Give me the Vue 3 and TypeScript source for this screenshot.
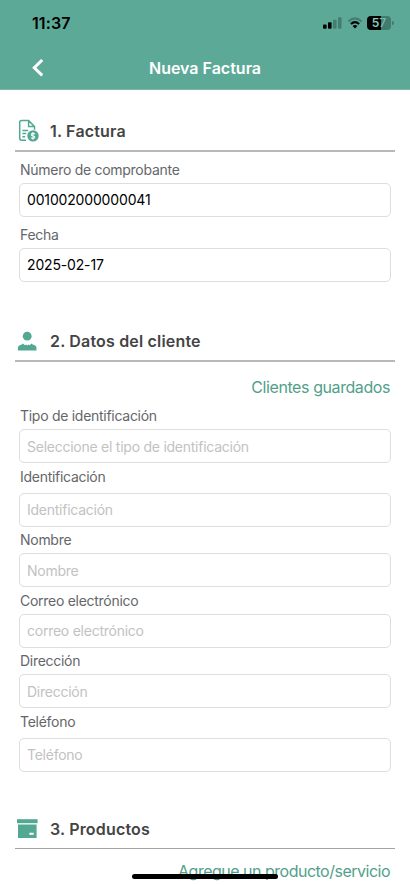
<script setup lang="ts">
import { ref } from 'vue'

interface Field {
  id: string
  label: string
  placeholder?: string
  value: string
  roomy?: boolean
}

const invoice = ref<Field[]>([
  { id: 'numero', label: 'Número de comprobante', value: '001002000000041' },
  { id: 'fecha', label: 'Fecha', value: '2025-02-17' },
])

const client = ref<Field[]>([
  { id: 'tipo', label: 'Tipo de identificación', placeholder: 'Seleccione el tipo de identificación', value: '' },
  { id: 'identificacion', label: 'Identificación', placeholder: 'Identificación', value: '', roomy: true },
  { id: 'nombre', label: 'Nombre', placeholder: 'Nombre', value: '' },
  { id: 'correo', label: 'Correo electrónico', placeholder: 'correo electrónico', value: '' },
  { id: 'direccion', label: 'Dirección', placeholder: 'Dirección', value: '' },
  { id: 'telefono', label: 'Teléfono', placeholder: 'Teléfono', value: '', roomy: true },
])
</script>

<template>
  <div class="screen">
    <header class="top">
      <div class="status">
        <span class="time">11:37</span>
        <div class="indicators">
          <svg class="signal" width="19" height="12" viewBox="0 0 19 12">
            <rect x="0" y="7.5" width="3.6" height="4.2" rx="1" />
            <rect x="5" y="5.3" width="3.6" height="6.4" rx="1" />
            <rect class="dim" x="10" y="2.8" width="3.6" height="8.9" rx="1" />
            <rect class="dim" x="15" y="0.3" width="3.6" height="11.4" rx="1" />
          </svg>
          <svg class="wifi" width="16" height="12" viewBox="0 0 16 12" fill="none">
            <path class="arc dim-stroke" d="M1.4 4.4Q8 -1.8 14.6 4.4" />
            <path class="arc" d="M3.9 7Q8 3.2 12.1 7" />
            <path fill="#000" d="M5.6 9Q8 7 10.4 9L8 11.4Z" />
          </svg>
          <div class="battery">
            <span class="level"><b>5</b><i>7</i></span>
            <span class="nub"></span>
          </div>
        </div>
      </div>
      <div class="nav">
        <button class="back" aria-label="Volver">
          <svg width="13" height="18" viewBox="0 0 13 18" fill="none">
            <path d="M10.2 1L2.3 8.7L10.2 16.4" stroke="#fff" stroke-width="3" />
          </svg>
        </button>
        <h1>Nueva Factura</h1>
      </div>
    </header>

    <main>
      <section class="invoice">
        <div class="heading">
          <svg class="icon" width="24" height="24" viewBox="0 0 24 24" fill="none">
            <path d="M9 21.2H4.6Q2.7 21.2 2.7 19.3V3.5Q2.7 1.6 4.6 1.6H11.6L17.5 7.5V10.8M11.6 1.6V7.5H17.5M5.4 11.4H11.2M5.4 14.6H9.2M5.4 17.8H8.2" stroke="#52a892" stroke-width="1.5" />
            <circle cx="16" cy="16.9" r="5.7" fill="#52a892" />
            <path d="M18 15.1Q16 13.7 14.5 14.9Q13.6 16.5 16 16.9Q18.5 17.4 17.5 18.9Q15.8 20.1 14 18.8M16 13V20.7" stroke="#fff" stroke-width="1.05" />
          </svg>
          <h2>1. Factura</h2>
        </div>
        <label v-for="f in invoice" :key="f.id" class="field">
          <span>{{ f.label }}</span>
          <input v-model="f.value" type="text" />
        </label>
      </section>

      <section class="client">
        <div class="heading">
          <svg class="icon" width="24" height="24" viewBox="0 0 24 24" fill="#52a892">
            <circle cx="10.2" cy="7.2" r="4.4" />
            <path d="M0.9 21.4V18.8Q1 16.5 3.3 15.9Q5 15.4 5.9 14.4L7.8 16.2L9 15.5L10.2 16.5L11.4 15.5L12.6 16.2L14.5 14.4Q15.4 15.4 17.1 15.9Q19.4 16.5 19.5 18.8V21.4Z" />
          </svg>
          <h2>2. Datos del cliente</h2>
        </div>
        <a class="link">Clientes guardados</a>
        <label v-for="f in client" :key="f.id" class="field" :class="{ roomy: f.roomy }">
          <span>{{ f.label }}</span>
          <input v-model="f.value" type="text" :placeholder="f.placeholder" />
        </label>
      </section>

      <section class="products">
        <div class="heading">
          <svg class="icon" width="24" height="24" viewBox="0 0 24 24">
            <path fill="#52a892" d="M0 2.2H20.6V6.2H0Z" />
            <path fill="#52a892" fill-rule="evenodd" d="M1 7.6H19.6V21H1ZM12.3 15.7V17.7H16.7V15.7Z" />
          </svg>
          <h2>3. Productos</h2>
        </div>
        <a class="link">Agregue un producto/servicio</a>
      </section>
    </main>
    <div class="home-bar"></div>
  </div>
</template>

<style>
body {
  margin: 0;
  background: #fff;
}
</style>

<style scoped>
.screen {
  position: relative;
  width: 410px;
  height: 885px;
  overflow: hidden;
  background: #fff;
  font-family: Inter, 'Liberation Sans', sans-serif;
}
.top {
  height: 90px;
  box-sizing: border-box;
  background: #5ca997;
  border-bottom: 1px solid #7db5a7;
}
.status {
  display: flex;
  justify-content: space-between;
  align-items: center;
  height: 46px;
  padding: 0 16px 0 32px;
}
.time {
  font-size: 16px;
  font-weight: 600;
  letter-spacing: 0.1px;
}
.indicators {
  display: flex;
  align-items: center;
}
.dim {
  opacity: 0.25;
}
.wifi {
  margin: 0 4px 0 5px;
}
.arc {
  stroke: #000;
  stroke-width: 2.1;
}
.dim-stroke {
  opacity: 0.25;
}
.battery {
  display: flex;
  align-items: center;
  gap: 1px;
}
.level {
  display: flex;
  justify-content: center;
  width: 24px;
  height: 14px;
  border-radius: 4px;
  background: linear-gradient(90deg, #000 57%, #417b6d 57%);
  font-size: 12px;
  line-height: 14px;
  font-weight: 600;
  color: #6fb8a7;
}
.level b {
  font-weight: 600;
  color: #8acbbb;
}
.level i {
  font-style: normal;
}
.nub {
  width: 2px;
  height: 4px;
  border-radius: 0 2px 2px 0;
  background: #417b6d;
}
.nav {
  display: grid;
  grid-template-columns: 60px 1fr 60px;
  align-items: center;
  height: 43px;
}
.back {
  display: flex;
  padding: 0 0 0 31.5px;
  border: 0;
  background: none;
}
h1 {
  margin: 0;
  text-align: center;
  font-size: 16px;
  line-height: 24px;
  font-weight: 600;
  color: #fff;
}
main {
  padding: 0 15px;
}
section {
  display: flex;
  flex-direction: column;
}
.invoice {
  padding-top: 23px;
}
.client {
  padding-top: 41px;
}
.products {
  padding-top: 39.5px;
}
.heading {
  display: flex;
  align-items: center;
  gap: 9px;
  box-sizing: border-box;
  height: 39px;
  padding: 0 0 2px 2px;
  border-bottom: 2px solid #b9b9b9;
}
.products .heading {
  height: 38px;
  border-bottom: 1px solid #9ea6a2;
}
.icon {
  flex: none;
}
h2 {
  margin: 0;
  font-size: 16px;
  line-height: 24px;
  font-weight: 570;
  letter-spacing: 0.18px;
  color: #444;
}
.field {
  display: flex;
  flex-direction: column;
  gap: 3px;
  padding: 0 4px;
}
.field span {
  padding-left: 1px;
  font-size: 14px;
  line-height: 20px;
  letter-spacing: -0.28px;
  color: #65666a;
}
.field input {
  box-sizing: border-box;
  width: 100%;
  height: 34px;
  padding: 0 7px;
  border: 1px solid #dedede;
  border-radius: 5px;
  background: #fff;
  font: 14px Inter, 'Liberation Sans', sans-serif;
  letter-spacing: -0.16px;
  color: #000;
  outline: none;
}
.field input::placeholder {
  color: #c2c2c2;
  letter-spacing: -0.25px;
  opacity: 1;
}
.invoice .field {
  margin-top: 8px;
}
.invoice .field input {
  padding-bottom: 2px;
}
.client .field {
  margin-top: 3.5px;
}
.client .roomy {
  gap: 6px;
}
.link {
  align-self: flex-end;
  margin: 13px 5px 0 0;
  height: 27.5px;
  font-size: 16px;
  line-height: 24px;
  letter-spacing: -0.42px;
  color: #52a08a;
}
.products .link {
  margin-top: 10px;
  letter-spacing: -0.5px;
}
.home-bar {
  position: absolute;
  left: 132px;
  top: 874px;
  width: 146px;
  height: 5px;
  border-radius: 3px;
  background: #000;
}
</style>
